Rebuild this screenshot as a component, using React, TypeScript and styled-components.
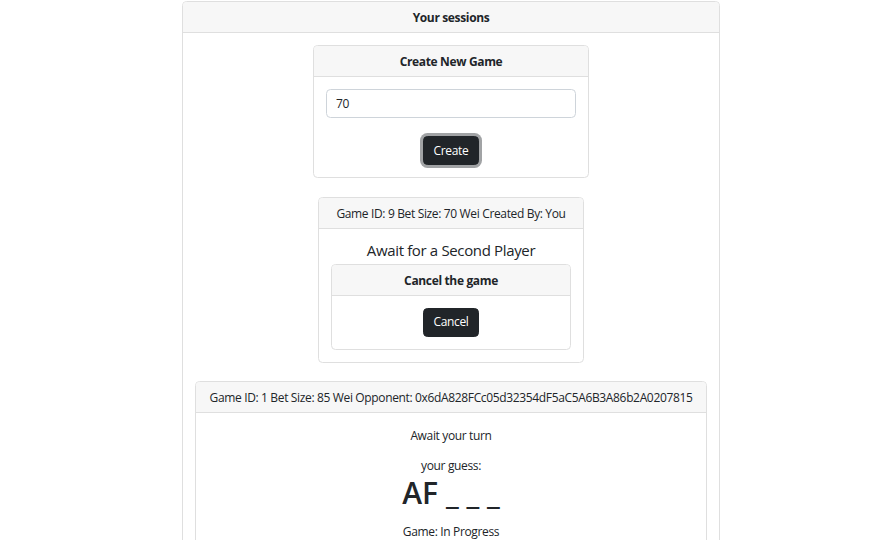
import React from "react";
import styled, { createGlobalStyle } from "styled-components";

const GlobalStyle = createGlobalStyle`
    html, body {
        margin: 0;
        padding: 0;
        background: #fff;
    }
    body {
        font-family: "Open Sans", "Noto Sans", sans-serif;
        font-size: 12px;
        line-height: 1.5;
        letter-spacing: -0.35px;
        color: #212529;
    }
`;

const Page = styled.div`
    padding: 1px 0 0 11px;
`;

const Card = styled.div<{ width: number }>`
    width: ${({ width }) => width}px;
    box-sizing: border-box;
    margin: 0 auto;
    border: 1px solid #dfdfdf;
    border-radius: 4.5px;
    background: #fff;
    overflow: hidden;
`;

const CardHeader = styled.div<{ bold?: boolean }>`
    padding: 7px 12px 5px;
    background: #f7f7f7;
    border-bottom: 1px solid #dfdfdf;
    text-align: center;
    font-weight: ${({ bold }) => (bold ? 700 : 400)};
    white-space: nowrap;
`;

const CardBody = styled.div<{ gap?: number; top?: number }>`
    padding: ${({ top }) => top ?? 12}px 12px 12px;
    display: flex;
    flex-direction: column;
    align-items: center;
    gap: ${({ gap }) => gap ?? 18}px;
    text-align: center;
`;

const Input = styled.input`
    align-self: stretch;
    box-sizing: border-box;
    height: 29px;
    padding: 4px 9px;
    border: 1px solid #ced4da;
    border-radius: 4.5px;
    font: inherit;
    letter-spacing: inherit;
    color: #212529;
    outline: none;
`;

const Button = styled.button<{ focused?: boolean }>`
    width: 56px;
    height: 29px;
    padding: 0;
    border: 1px solid #212529;
    border-radius: 4.5px;
    background: #212529;
    color: #fff;
    font: inherit;
    letter-spacing: inherit;
    cursor: pointer;
    box-shadow: ${({ focused }) => (focused ? "0 0 0 3px #a1a3a5" : "none")};
`;

const Stack = styled.div`
    display: flex;
    flex-direction: column;
    align-items: stretch;
    width: 100%;
`;

const Title = styled.div`
    font-size: 15px;
    line-height: 1.2;
    font-weight: 500;
    margin-bottom: 5px;
`;

const Line = styled.p<{ mb?: number }>`
    margin: 0 0 ${({ mb }) => mb ?? 0}px;
`;

const Guess = styled.div`
    font-size: 30px;
    line-height: 1.2;
    font-weight: 600;
    letter-spacing: 0;
    margin-bottom: 12px;
`;

export default function App() {
    return (
        <>
            <GlobalStyle />
            <Page>
                <Card width={538}>
                    <CardHeader bold>Your sessions</CardHeader>
                    <CardBody gap={18.5}>
                        <Card width={276}>
                            <CardHeader bold>Create New Game</CardHeader>
                            <CardBody>
                                <Input defaultValue="70" />
                                <Button focused>Create</Button>
                            </CardBody>
                        </Card>

                        <Card width={266}>
                            <CardHeader>Game ID: 9 Bet Size: 70 Wei Created By: You</CardHeader>
                            <CardBody gap={0}>
                                <Stack>
                                    <Title>Await for a Second Player</Title>
                                    <Card width={240}>
                                        <CardHeader bold>Cancel the game</CardHeader>
                                        <CardBody>
                                            <Button>Cancel</Button>
                                        </CardBody>
                                    </Card>
                                </Stack>
                            </CardBody>
                        </Card>

                        <Card width={512}>
                            <CardHeader>
                                Game ID: 1 Bet Size: 85 Wei Opponent: 0x6dA828FCc05d32354dF5aC5A6B3A86b2A0207815
                            </CardHeader>
                            <CardBody gap={0} top={14}>
                                <Line mb={12}>Await your turn</Line>
                                <Line>your guess:</Line>
                                <Guess>AF _ _ _</Guess>
                                <Line mb={12}>Game: In Progress</Line>
                            </CardBody>
                        </Card>
                    </CardBody>
                </Card>
            </Page>
        </>
    );
}
